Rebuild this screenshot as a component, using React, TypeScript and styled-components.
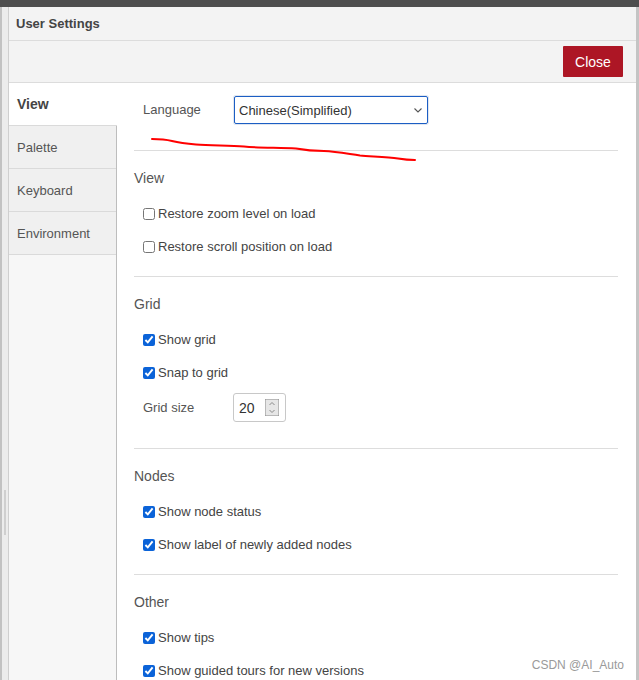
import React from 'react'
import styled, { createGlobalStyle } from 'styled-components'

const GlobalStyle = createGlobalStyle`
  html, body {
    margin: 0;
    padding: 0;
    height: 100%;
    overflow: hidden;
    background: #fff;
  }
  body {
    font-family: 'Liberation Sans', Arial, sans-serif;
    color: #555;
  }
  #root {
    height: 100%;
  }
`

interface Tab {
  label: string
  active?: boolean
}

interface Option {
  label: string
  checked: boolean
}

interface SectionData {
  title: string
  options: Option[]
  gridSize?: boolean
}

const tabs: Tab[] = [
  { label: 'View', active: true },
  { label: 'Palette' },
  { label: 'Keyboard' },
  { label: 'Environment' },
]

const sections: SectionData[] = [
  {
    title: 'View',
    options: [
      { label: 'Restore zoom level on load', checked: false },
      { label: 'Restore scroll position on load', checked: false },
    ],
  },
  {
    title: 'Grid',
    options: [
      { label: 'Show grid', checked: true },
      { label: 'Snap to grid', checked: true },
    ],
    gridSize: true,
  },
  {
    title: 'Nodes',
    options: [
      { label: 'Show node status', checked: true },
      { label: 'Show label of newly added nodes', checked: true },
    ],
  },
  {
    title: 'Other',
    options: [
      { label: 'Show tips', checked: true },
      { label: 'Show guided tours for new versions', checked: true },
    ],
  },
]

export default function App() {
  return (
    <>
      <GlobalStyle />
      <Screen>
        <TopBar />
        <Frame>
          <Gutter>
            <ScrollThumb />
          </Gutter>
          <Dialog>
            <TitleBar>User Settings</TitleBar>
            <Toolbar>
              <CloseButton type="button">Close</CloseButton>
            </Toolbar>
            <Body>
              <Sidebar>
                {tabs.map((tab) => (
                  <TabItem key={tab.label} active={!!tab.active}>
                    {tab.label}
                  </TabItem>
                ))}
              </Sidebar>
              <Content>
                <LanguageRow>
                  <FieldLabel>Language</FieldLabel>
                  <SelectBox>
                    <span>Chinese(Simplified)</span>
                    <Chevron viewBox="0 0 8 5">
                      <polyline points="0.5 0.5 4 4 7.5 0.5" />
                    </Chevron>
                  </SelectBox>
                </LanguageRow>
                {sections.map((section) => (
                  <Section key={section.title}>
                    <Divider />
                    <SectionTitle>{section.title}</SectionTitle>
                    <OptionList>
                      {section.options.map((opt) => (
                        <OptionRow key={opt.label}>
                          <Check type="checkbox" defaultChecked={opt.checked} />
                          {opt.label}
                        </OptionRow>
                      ))}
                      {section.gridSize && (
                        <FieldRow>
                          <FieldLabel>Grid size</FieldLabel>
                          <NumberBox>
                            <NumberValue>20</NumberValue>
                            <Spinner viewBox="0 0 14 17">
                              <rect width="14" height="17" fill="#e6e6e6" />
                              <polyline points="4.5 6 7 3.5 9.5 6" />
                              <polyline points="4.5 11 7 13.5 9.5 11" />
                            </Spinner>
                          </NumberBox>
                        </FieldRow>
                      )}
                    </OptionList>
                  </Section>
                ))}
              </Content>
            </Body>
          </Dialog>
          <RightEdge />
        </Frame>
        <Scribble viewBox="0 0 639 180">
          <path d="M152 139 C160 139 166 139.5 172 141 C178 142.5 184 143.5 196 144.5 C210 145.5 228 145.5 244 146.5 C258 148 280 147.5 296 148.5 C304 150 312 151 324 151 C336 151.5 346 153.5 360 155.5 C372 156.5 388 157 398 158.5 C404 159.5 410 160 415 160" />
        </Scribble>
        <Watermark>CSDN @AI_Auto</Watermark>
      </Screen>
    </>
  )
}

const Screen = styled.div`
  position: relative;
  height: 100%;
  display: flex;
  flex-direction: column;
`

const TopBar = styled.div`
  height: 7px;
  flex: none;
  background: #4e4e4e;
`

const Frame = styled.div`
  flex: 1;
  display: flex;
  min-height: 0;
`

const Gutter = styled.div`
  position: relative;
  width: 9px;
  flex: none;
  background: #ececec;
  border-left: 2px solid #c2c2c2;
  box-sizing: border-box;
  border-right: 1px solid #cfcfcf;
`

const ScrollThumb = styled.div`
  position: absolute;
  left: 2px;
  top: 483px;
  width: 2px;
  height: 45px;
  background: #cfcfcf;
`

const RightEdge = styled.div`
  width: 3px;
  flex: none;
  background: #c4c4c4;
`

const Dialog = styled.div`
  flex: 1;
  display: flex;
  flex-direction: column;
  min-width: 0;
  background: #fff;
`

const TitleBar = styled.div`
  height: 33px;
  flex: none;
  display: flex;
  align-items: center;
  padding-left: 7px;
  background: #f3f3f3;
  border-bottom: 1px solid #dcdcdc;
  font-size: 13px;
  font-weight: bold;
  color: #444;
`

const Toolbar = styled.div`
  height: 42px;
  flex: none;
  display: flex;
  justify-content: flex-end;
  align-items: flex-start;
  padding: 5px 13px 0 0;
  box-sizing: border-box;
  background: #f3f3f3;
  border-bottom: 1px solid #dcdcdc;
`

const CloseButton = styled.button`
  width: 60px;
  height: 31px;
  border: none;
  border-radius: 1px;
  background: #ad1625;
  color: #fff;
  font-family: 'Liberation Sans', Arial, sans-serif;
  font-size: 14px;
  padding: 0;
`

const Body = styled.div`
  flex: 1;
  display: flex;
  min-height: 0;
`

const Sidebar = styled.div`
  width: 108px;
  flex: none;
  box-sizing: border-box;
  background: #f7f7f7;
  border-right: 1px solid #bdbdbd;
`

const TabItem = styled.div<{ active: boolean }>`
  height: 43px;
  box-sizing: border-box;
  display: flex;
  align-items: center;
  padding-left: 8px;
  border-bottom: 1px solid #dadada;
  background: ${({ active }) => (active ? '#fff' : '#f0f0f0')};
  margin-right: ${({ active }) => (active ? '-1px' : '0')};
  font-size: ${({ active }) => (active ? '14px' : '13px')};
  font-weight: ${({ active }) => (active ? 'bold' : 'normal')};
  color: ${({ active }) => (active ? '#444' : '#555')};
`

const Content = styled.div`
  flex: 1;
  min-width: 0;
  padding: 13px 18px 0 17px;
`

const LanguageRow = styled.div`
  display: flex;
  align-items: center;
  padding-left: 9px;
  margin-bottom: 26px;
`

const FieldLabel = styled.div`
  width: 91px;
  flex: none;
  font-size: 13px;
  color: #555;
  margin-top: -1px;
`

const SelectBox = styled.div`
  width: 194px;
  height: 28px;
  box-sizing: border-box;
  display: flex;
  align-items: center;
  justify-content: space-between;
  padding: 0 5px 0 4px;
  border: 1px solid #1c5ec4;
  border-radius: 2px;
  box-shadow: 0 0 0 1px #dfe6f0;
  font-size: 13px;
  color: #333;
`

const Chevron = styled.svg`
  width: 8px;
  height: 5px;
  fill: none;
  stroke: #555;
  stroke-width: 1.1px;
`

const Section = styled.div`
  display: flex;
  flex-direction: column;
`

const Divider = styled.div`
  height: 1px;
  background: #dddddd;
`

const SectionTitle = styled.div`
  margin-top: 17px;
  line-height: 20px;
  font-size: 14px;
  color: #555;
`

const OptionList = styled.div`
  display: flex;
  flex-direction: column;
  gap: 13px;
  margin: 15px 0 20px;
  padding-left: 9px;
`

const OptionRow = styled.label`
  display: flex;
  align-items: center;
  height: 20px;
  font-size: 13px;
  color: #444;
`

const Check = styled.input`
  width: 12px;
  height: 12px;
  margin: 2px 3px 0 0;
  accent-color: #0b63d8;
`

const FieldRow = styled.div`
  display: flex;
  align-items: center;
  margin: -2px 0 6px;
  & > div:first-child {
    width: 90px;
  }
`

const NumberBox = styled.div`
  width: 53px;
  height: 29px;
  box-sizing: border-box;
  display: flex;
  align-items: center;
  justify-content: space-between;
  padding: 0 6px 0 5px;
  border: 1px solid #c8c8c8;
  border-radius: 3px;
`

const NumberValue = styled.span`
  font-size: 14px;
  color: #333;
`

const Spinner = styled.svg`
  width: 14px;
  height: 17px;
  fill: none;
  stroke: #8a8a8a;
  stroke-width: 1px;
`

const Scribble = styled.svg`
  position: absolute;
  left: 0;
  top: 0;
  width: 639px;
  height: 180px;
  pointer-events: none;
  fill: none;
  stroke: #ff0000;
  stroke-width: 2px;
  stroke-linecap: round;
`

const Watermark = styled.div`
  position: absolute;
  right: 15px;
  bottom: 8px;
  font-size: 12px;
  color: #9a9a9a;
  pointer-events: none;
`
